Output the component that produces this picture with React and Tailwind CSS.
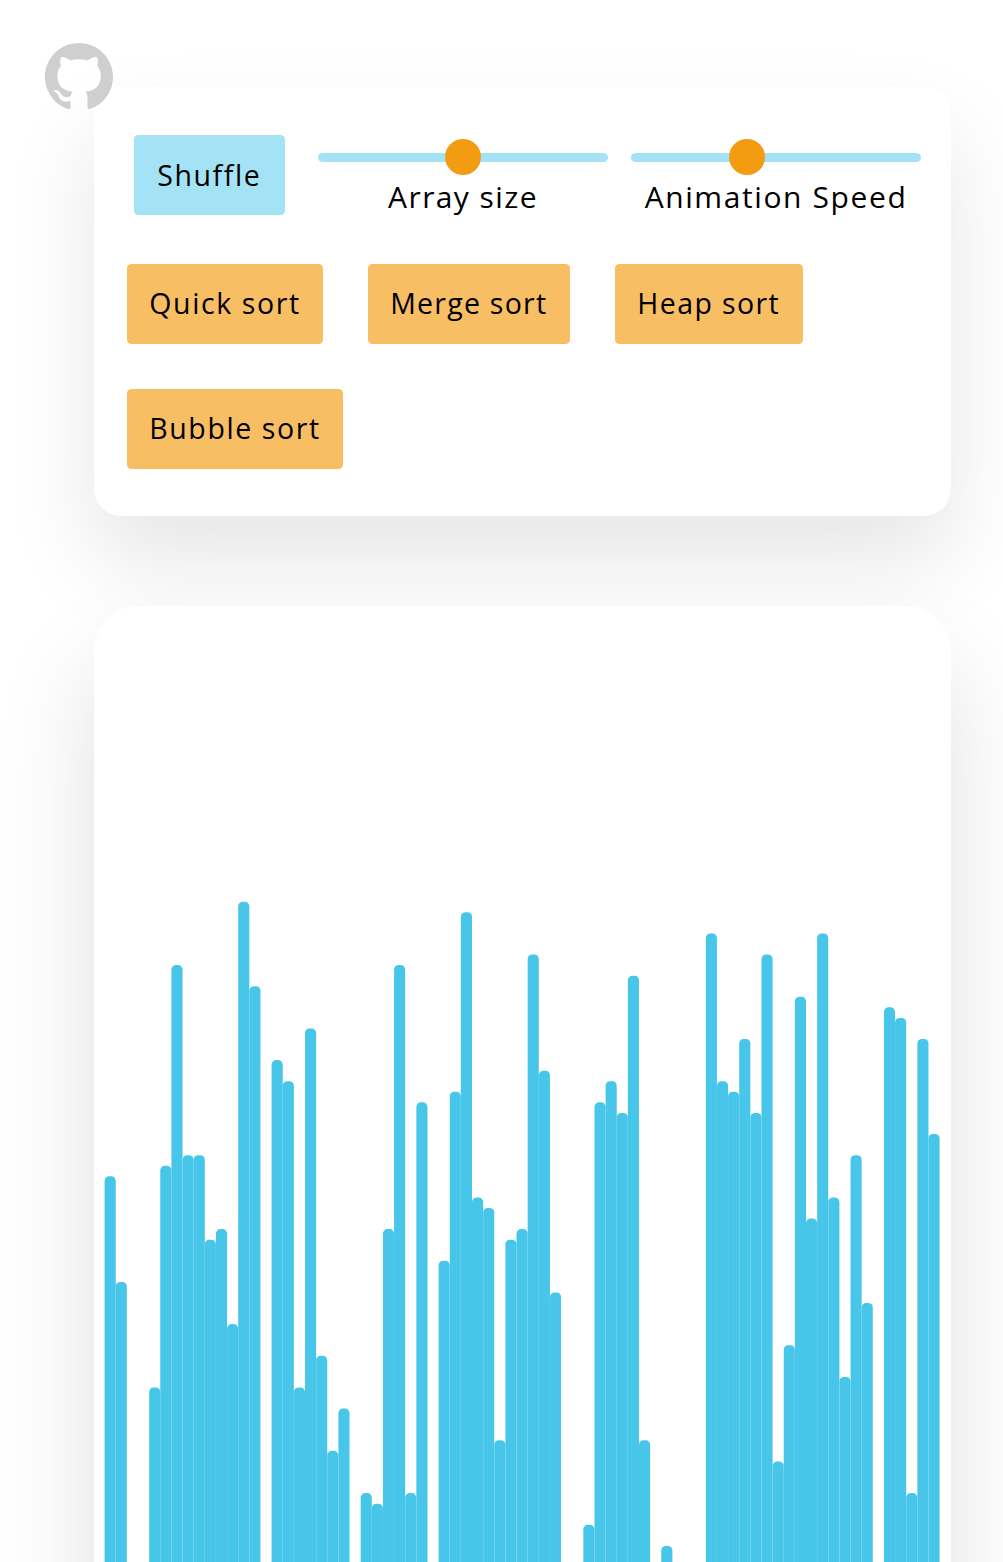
const VALUES = [
  37, 27, 0, 0, 17, 38, 57, 39, 39, 31, 32, 23, 63, 55, 0, 48, 46, 17, 51, 20,
  11, 15, 0, 7, 6, 32, 57, 7, 44, 0, 29, 45, 62, 35, 34, 12, 31, 32, 58, 47,
  26, 0, 0, 4, 44, 46, 43, 56, 12, 0, 2, 0, 0, 0, 60, 46, 45, 50, 43, 58,
  10, 21, 54, 33, 60, 35, 18, 39, 25, 0, 53, 52, 7, 50, 41,
];

const UNIT = 10.56;
const BAR_WIDTH = 835 / VALUES.length;
const CHART_HEIGHT = 666;

function GithubMark() {
  return (
    <svg viewBox="0 0 16 15.7" className="h-[66.5px] w-[68px]" preserveAspectRatio="none" fill="#cfcfcf">
      <path d="M8 0C3.58 0 0 3.58 0 8c0 3.54 2.29 6.53 5.47 7.59.4.07.55-.17.55-.38 0-.19-.01-.82-.01-1.49-2.01.37-2.53-.49-2.69-.94-.09-.23-.48-.94-.82-1.13-.28-.15-.68-.52-.01-.53.63-.01 1.08.58 1.23.82.72 1.21 1.87.87 2.33.66.07-.52.28-.87.51-1.07-1.78-.2-3.64-.89-3.64-3.95 0-.87.31-1.59.82-2.15-.08-.2-.36-1.02.08-2.12 0 0 .67-.21 2.2.82.64-.18 1.32-.27 2-.27.68 0 1.36.09 2 .27 1.53-1.04 2.2-.82 2.2-.82.44 1.1.16 1.92.08 2.12.51.56.82 1.27.82 2.15 0 3.07-1.87 3.75-3.65 3.95.29.25.54.73.54 1.48 0 1.07-.01 1.93-.01 2.2 0 .21.15.46.55.38A8.013 8.013 0 0 0 16 8c0-4.42-3.58-8-8-8z" />
    </svg>
  );
}

function Slider({ label, thumb, labelClass }) {
  return (
    <div className="flex w-[290px] flex-col items-center">
      <div className="relative mt-[17.5px] h-[9px] w-full rounded-full bg-[#a4e3f5]">
        <span
          className="absolute -top-[13.5px] h-9 w-9 -translate-x-1/2 rounded-full bg-[#f39c12]"
          style={{ left: thumb }}
        />
      </div>
      <span className={`mt-[17px] whitespace-nowrap text-[30px] leading-[36px] ${labelClass}`}>{label}</span>
    </div>
  );
}

function SortButton({ children, className }) {
  return (
    <button className={`h-20 whitespace-nowrap rounded-[4.5px] bg-[#f7be63] text-[28.5px] ${className}`}>
      {children}
    </button>
  );
}

function Chart() {
  return (
    <svg width="835" height={CHART_HEIGHT} viewBox={`0.4 1 835 ${CHART_HEIGHT}`} fill="#48c6ea" className="block overflow-visible">
      {VALUES.map((value, i) =>
        value > 0 ? (
          <rect
            key={i}
            x={i * BAR_WIDTH}
            y={CHART_HEIGHT - value * UNIT}
            width={BAR_WIDTH}
            height={value * UNIT + 10}
            rx="4.5"
          />
        ) : null
      )}
    </svg>
  );
}

export default function App() {
  return (
    <div className="relative h-[1562px] w-[1003px] overflow-hidden bg-white pt-[87px] pl-[93.5px] font-['Open_Sans',sans-serif] font-normal text-black">
      <section className="h-[428.5px] w-[857px] rounded-[27px] bg-white pt-12 pl-[33.5px] shadow-[0_45px_90px_rgba(0,0,0,0.1)]">
        <div className="flex items-start pl-[7px]">
          <button className="mr-[33.5px] h-20 w-[150.5px] rounded-[4.5px] bg-[#a4e3f5] text-[28.5px] tracking-[1.6px]">
            Shuffle
          </button>
          <div className="flex gap-[23px]">
            <Slider label="Array size" thumb="144.5px" labelClass="tracking-[1.4px]" />
            <Slider label="Animation Speed" thumb="116px" labelClass="tracking-[1.6px]" />
          </div>
        </div>
        <div className="mt-[48.5px] flex flex-wrap gap-[45px]">
          <SortButton className="w-[196px] tracking-[1.6px]">Quick sort</SortButton>
          <SortButton className="w-[201.5px] tracking-[1.25px]">Merge sort</SortButton>
          <SortButton className="w-[188.5px] tracking-[1.4px]">Heap sort</SortButton>
          <SortButton className="w-[216px] tracking-[1.6px]">Bubble sort</SortButton>
        </div>
      </section>

      <section className="mt-[90px] h-[1400px] w-[857px] rounded-[45px] bg-white px-[11px] pt-[296px] shadow-[0_56px_100px_rgba(0,0,0,0.125)]">
        <Chart />
      </section>

      <a href="#" aria-label="GitHub" className="absolute top-[42.5px] left-[44.5px]">
        <GithubMark />
      </a>
    </div>
  );
}
